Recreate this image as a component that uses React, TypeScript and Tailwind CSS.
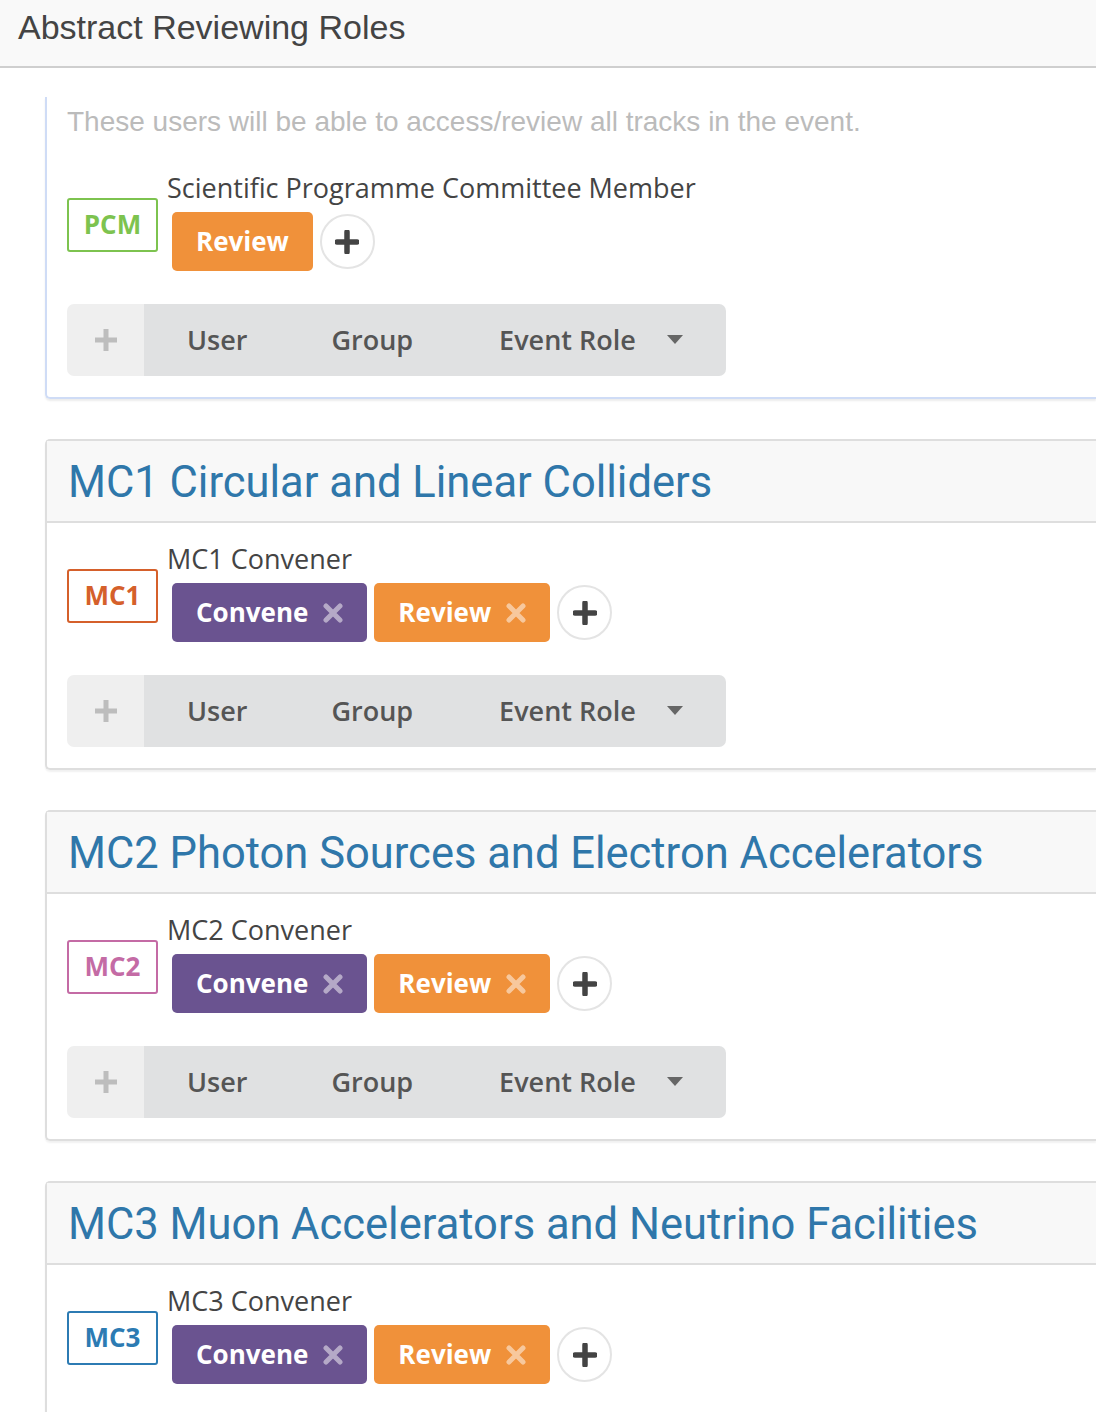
import React from 'react'

const roleFont = { fontFamily: '"Open Sans", Lato, sans-serif' }

type Perm = { label: string; color: string; removable: boolean }

function PermButton({ perm }: { perm: Perm }) {
    return (
        <span
            className={`inline-flex h-[59px] items-center gap-[15px] rounded-[5px] px-[24px] text-[26px] font-bold text-white ${perm.color}`}
        >
            {perm.label}
            {perm.removable && (
                <svg width="20" height="20" viewBox="0 0 20 20" className="opacity-50">
                    <path d="M3 3 L17 17 M17 3 L3 17" stroke="white" strokeWidth="5" strokeLinecap="round" />
                </svg>
            )}
        </span>
    )
}

function AddCircle() {
    return (
        <span className="inline-flex h-[55px] w-[55px] items-center justify-center rounded-full border-2 border-[#e4e4e4] bg-white">
            <svg width="24" height="24" viewBox="0 0 24 24">
                <path d="M12 2 V22 M2 12 H22" stroke="#444" strokeWidth="5.5" strokeLinecap="round" />
            </svg>
        </span>
    )
}

function PrincipalBar() {
    return (
        <div className="mt-[33px] flex h-[72px] w-[659px] overflow-hidden rounded-[7px] text-[27px] font-semibold text-[#555]" style={roleFont}>
            <div className="flex w-[77px] items-center justify-center bg-[#efefef]">
                <svg width="26" height="26" viewBox="0 0 26 26">
                    <path d="M13 2 V24 M2 13 H24" stroke="#bdbdbd" strokeWidth="5" />
                </svg>
            </div>
            <div className="flex flex-1 items-center bg-[#e0e1e2]">
                <span className="pl-[43px] pr-[42px]">User</span>
                <span className="pl-[42px] pr-[43px]">Group</span>
                <span className="flex items-center pl-[43px]">
                    Event Role
                    <svg width="16" height="10" viewBox="0 0 16 10" className="ml-[31px]">
                        <path d="M0 0 H16 L8 9 Z" fill="#666" />
                    </svg>
                </span>
            </div>
        </div>
    )
}

function RoleRow({
    code,
    codeColor,
    name,
    perms,
}: {
    code: string
    codeColor: string
    name: string
    perms: Perm[]
}) {
    return (
        <div className="flex items-center" style={roleFont}>
            <span
                className={`mt-[6px] flex h-[54px] w-[91px] items-center justify-center rounded-[3px] border-2 bg-white text-[26px] font-bold ${codeColor}`}
            >
                {code}
            </span>
            <div className="ml-[9px] flex flex-col">
                <span className="text-[27px] leading-[32px] text-[#444]">{name}</span>
                <div className="mt-[8px] flex items-center gap-[7px] pl-[5px]">
                    {perms.map((p) => (
                        <PermButton key={p.label} perm={p} />
                    ))}
                    <AddCircle />
                </div>
            </div>
        </div>
    )
}

const convene: Perm = { label: 'Convene', color: 'bg-[#6a5390]', removable: true }
const review: Perm = { label: 'Review', color: 'bg-[#f0913a]', removable: true }

const tracks = [
    { code: 'MC1', title: 'MC1 Circular and Linear Colliders', color: 'border-[#d5602b] text-[#d5602b]' },
    { code: 'MC2', title: 'MC2 Photon Sources and Electron Accelerators', color: 'border-[#c46ba5] text-[#c46ba5]' },
    { code: 'MC3', title: 'MC3 Muon Accelerators and Neutrino Facilities', color: 'border-[#2c7bb3] text-[#2c7bb3]' },
]

export default function App() {
    return (
        <div className="h-[1412px] w-[1096px] overflow-hidden bg-white">
            <div className="flex h-[68px] items-start border-b-2 border-[#cfcfcf] bg-[#f9f9f9] pl-[18px] pt-[6px]">
                <h1 className="text-[34px] leading-[42px] text-[#444]" style={{ fontFamily: '"Liberation Sans", Arial, sans-serif' }}>
                    Abstract Reviewing Roles
                </h1>
            </div>

            <div className="ml-[45px] mt-[29px] rounded-bl-[5px] border-b-2 border-l-2 border-[#cfdcf6] pb-[21px] pl-[20px] pt-[10px] shadow-[0_2px_2px_rgba(0,0,0,0.08)]">
                <p className="text-[28px] leading-[30px] text-[#bbb]" style={{ fontFamily: '"Liberation Sans", Arial, sans-serif' }}>
                    These users will be able to access/review all tracks in the event.
                </p>
                <div className="mt-[35px]">
                    <RoleRow
                        code="PCM"
                        codeColor="border-[#7dc34f] text-[#7dc34f]"
                        name="Scientific Programme Committee Member"
                        perms={[{ label: 'Review', color: 'bg-[#f0913a]', removable: false }]}
                    />
                </div>
                <PrincipalBar />
            </div>

            {tracks.map((t, i) => {
                const last = i === tracks.length - 1
                return (
                    <div
                        key={t.code}
                        className="ml-[45px] mt-[40px] rounded-l-[5px] border-y-2 border-l-2 border-[#dedede] shadow-[0_2px_2px_rgba(0,0,0,0.06)]"
                    >
                        <div className="flex h-[82px] items-center border-b-2 border-[#dedede] bg-[#f8f8f8] pl-[21px] pt-[4px]">
                            <h2 className="text-[43.5px] text-[#2f77aa]" style={{ fontFamily: 'Roboto, sans-serif' }}>
                                {t.title}
                            </h2>
                        </div>
                        <div className={`pb-[21px] pl-[20px] pt-[20px] ${last ? 'min-h-[226px]' : ''}`}>
                            <RoleRow code={t.code} codeColor={t.color} name={`${t.code} Convener`} perms={[convene, review]} />
                            {!last && <PrincipalBar />}
                        </div>
                    </div>
                )
            })}
        </div>
    )
}
